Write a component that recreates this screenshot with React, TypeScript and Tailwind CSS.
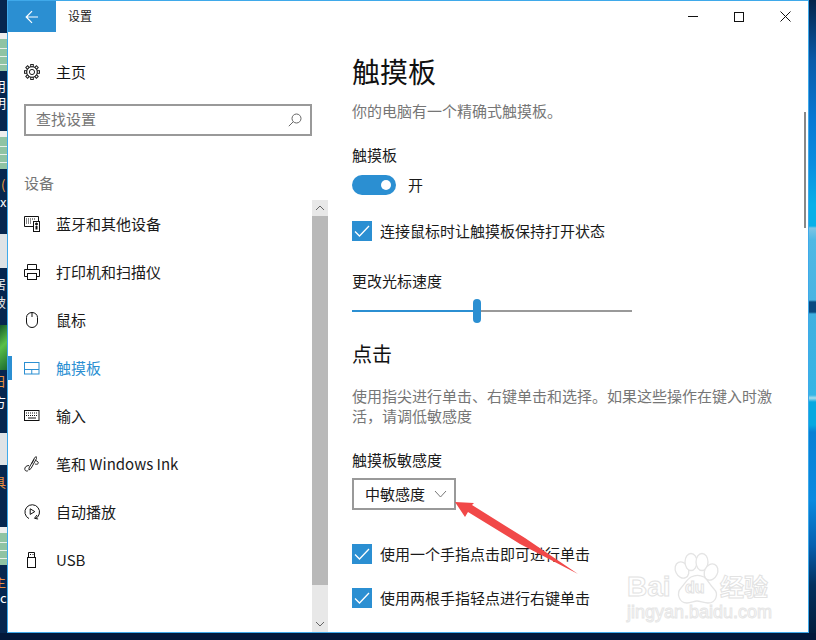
import React from "react";

const FONT = "font-['Noto_Sans_CJK_SC','Noto_Sans',sans-serif]";

function Gear() {
  const teeth = [0, 45, 90, 135, 180, 225, 270, 315];
  return (
    <svg width="16" height="16" viewBox="0 0 16 16" fill="none" stroke="#222" strokeWidth="1">
      <circle cx="8" cy="8" r="2.6" />
      <circle cx="8" cy="8" r="5.4" />
      {teeth.map((t) => (
        <rect key={t} x="6.7" y="0.5" width="2.6" height="2.2" fill="#fff" transform={`rotate(${t} 8 8)`} />
      ))}
    </svg>
  );
}

function DeviceIcon() {
  return (
    <svg width="16" height="16" viewBox="0 0 16 16" fill="none" stroke="#111" strokeWidth="1">
      <path d="M9 10.500H.5V.5h14V5" />
      <rect x="9.500" y="5.500" width="6" height="10" />
      <path d="M2 3h10M2 5h6M2 7h6" strokeDasharray="1 1" />
      <circle cx="12.500" cy="8" r="1" fill="#111" />
      <path d="M12.500 10v3.500" strokeWidth="2" />
    </svg>
  );
}
function PrinterIcon() {
  return (
    <svg width="16" height="16" viewBox="0 0 16 16" fill="none" stroke="#111" strokeWidth="1">
      <path d="M3.500 5V.5h9V5" />
      <path d="M3.500 12.500H.5V5.500h15v7h-3" />
      <rect x="3.500" y="9.500" width="9" height="6" />
    </svg>
  );
}
function MouseIcon() {
  return (
    <svg width="16" height="16" viewBox="0 0 16 16" fill="none" stroke="#111" strokeWidth="1">
      <path d="M2.500 5.500a5.500 5 0 0 1 5.500-5 5.500 5 0 0 1 5.500 5V10a5.500 5.500 0 0 1-11 0Z" />
      <path d="M8 .5V5" />
    </svg>
  );
}
function PadIcon() {
  return (
    <svg width="16" height="13" viewBox="0 0 16 13" fill="none" stroke="#2b8fd2" strokeWidth="1">
      <rect x="0.500" y="0.500" width="14.500" height="11.500" />
      <path d="M.5 7.500H15M7.750 7.500V12" />
    </svg>
  );
}
function KeyboardIcon() {
  return (
    <svg width="16" height="12" viewBox="0 0 16 12" fill="none" stroke="#111" strokeWidth="1">
      <rect x="0.500" y="0.500" width="14.500" height="10" />
      <path d="M2 3h12M2 5.500h12" strokeDasharray="1 1" />
      <path d="M4 8h8" />
    </svg>
  );
}
function PenIcon() {
  return (
    <svg width="16" height="16" viewBox="0 0 16 16" fill="none" stroke="#222" strokeWidth="1">
      <path d="M5 12 10.500 2 12 .5l.5 2L7 12.500 5 14Z" />
      <path d="M7.500 8 10 3.500" />
      <path d="M11.500 4.500c2 .5 3.500 2 2.500 3.200-.7.8-2 .6-3 .3" />
      <path d="M5 9.500C2 9.500.5 11.500.8 13.500c.3 1.700 2.400 2 3.400 1" />
    </svg>
  );
}
function AutoplayIcon() {
  return (
    <svg width="16" height="16" viewBox="0 0 16 16" fill="none" stroke="#111" strokeWidth="1">
      <path d="M5 14.600A7.300 7.300 0 1 1 11 14.800" />
      <path d="M6.200 4.800v5.600l4.600-2.800Z" />
      <path d="M13 11l-2.500 3.300 3.600.7" />
    </svg>
  );
}
function UsbIcon() {
  return (
    <svg width="16" height="16" viewBox="0 0 16 16" fill="none" stroke="#111" strokeWidth="1">
      <rect x="3.500" y="5.500" width="8" height="10" />
      <path d="M4.500 5.500V.5h6v5" />
      <path d="M6 2.500h1M8.500 2.500h1" />
    </svg>
  );
}

function Nav({ icon, label, active }: { icon: React.ReactNode; label: string; active?: boolean }) {
  return (
    <div className="relative flex h-12 items-center pl-4">
      {active && <div className="absolute left-0 top-3 h-6 w-1 bg-[#2b8fd2]" />}
      <div className="flex w-4 items-center justify-center">{icon}</div>
      <span className={`ml-4 text-[15px] leading-5 ${active ? "text-[#2b8fd2]" : "text-[#1a1a1a]"}`}>{label}</span>
    </div>
  );
}

function Check({ label, className }: { label: string; className: string }) {
  return (
    <div className={`flex h-5 items-center gap-2 ${className}`}>
      <div className="flex h-5 w-5 items-center justify-center bg-[#2b8fd2]">
        <svg width="16" height="12" viewBox="0 0 16 12" fill="none" stroke="#fff" strokeWidth="1.3">
          <path d="M1 6.500 5.500 11 15 1" />
        </svg>
      </div>
      <span className="text-[15px] leading-5 text-[#1a1a1a]">{label}</span>
    </div>
  );
}

function Sheet({ className }: { className: string }) {
  return (
    <div className={`flex h-[38px] w-[7px] flex-col bg-[#8fc3a3] ${className}`}>
      <div className="h-[6px] bg-[#eeeeee]" />
      <div className="mt-[9px] h-px bg-[#e8f0ea]" />
      <div className="mt-[7px] h-px bg-[#e8f0ea]" />
      <div className="mt-[7px] h-px bg-[#e8f0ea]" />
    </div>
  );
}

function Frag({ t, className }: { t: string; className: string }) {
  return <div className={`h-[15px] overflow-hidden text-[13px] leading-[15px] whitespace-nowrap ${className}`}>{t}</div>;
}

function LeftStrip() {
  return (
    <div className="flex w-[7px] shrink-0 flex-col overflow-hidden bg-[#06264f]">
      <Sheet className="mt-[33px]" />
      <Frag t="用" className="mt-[7px] text-white [text-indent:-7px]" />
      <Frag t="明" className="mt-[2px] text-white [text-indent:-7px]" />
      <Sheet className="mt-[21px]" />
      <Frag t="(" className="mt-[8px] text-[#f0a040] [text-indent:1px]" />
      <Frag t="x" className="mt-[2px] text-white" />
      <div className="mt-[25px] h-[34px] w-[7px] bg-[#dfe3e6]" />
      <Frag t="居" className="mt-[8px] text-[#e8e8e8] [text-indent:-7px]" />
      <Frag t="破" className="mt-[3px] text-[#e8e8e8] [text-indent:-7px]" />
      <div className="mt-[16px] h-[45px] w-[7px] bg-[linear-gradient(135deg,#145a2a,#58c048_45%,#1c6a30)]" />
      <Frag t="日" className="mt-[3px] text-[#e89040] [text-indent:-7px]" />
      <Frag t="方" className="mt-[6px] text-white [text-indent:-7px]" />
      <div className="mt-[24px] h-[32px] w-[7px] bg-[#dfe3e6]" />
      <Frag t="具" className="mt-[9px] text-[#e89040] [text-indent:-7px]" />
      <Sheet className="mt-[38px]" />
      <Frag t="主" className="mt-[9px] text-[#e89040] [text-indent:-7px]" />
      <Frag t="c" className="mt-px text-white" />
    </div>
  );
}

function Watermark() {
  return (
    <div className="pointer-events-none absolute left-[627px] top-[552px] h-[74px] w-[146px]">
      <svg className="absolute left-0 top-0" width="146" height="56" viewBox="0 0 146 56" fill="#fff" stroke="#e4e4e4" strokeWidth="1.3">
        <ellipse cx="55" cy="18" rx="6.500" ry="8.500" transform="rotate(-25 55 18)" />
        <ellipse cx="64" cy="10" rx="6" ry="8.500" />
        <ellipse cx="75" cy="10" rx="6" ry="8.500" />
        <ellipse cx="84" cy="20" rx="6.500" ry="8.500" transform="rotate(25 84 20)" />
        <path d="M64 25c-4 2-7 8-10 11-5 5-2 15 6 15 4 0 7-2 10-2s7 2 11 2c8 0 11-9 6-14-4-4-6-9-10-12-4-2-9-2-13 0Z" />
      </svg>
      <span className="absolute left-0 top-[21px] font-['Liberation_Sans',sans-serif] text-[28px] font-bold leading-[28px] text-white [-webkit-text-stroke:1px_#e2e2e2]">Bai</span>
      <span className="absolute left-[58px] top-[25px] font-['Liberation_Sans',sans-serif] text-[16px] font-bold leading-[22px] text-white [-webkit-text-stroke:1px_#e2e2e2]">du</span>
      <span className={`absolute left-[93px] top-[20px] ${FONT} text-[24px] font-bold leading-[28px] text-white [-webkit-text-stroke:1px_#e2e2e2]`}>经验</span>
      <span className="absolute left-0 top-[49px] whitespace-nowrap font-['Liberation_Sans',sans-serif] text-[18px] leading-[22px] text-white [-webkit-text-stroke:1px_#e6e6e6]">jingyan.baidu.com</span>
    </div>
  );
}

function Arrow() {
  return (
    <svg className="pointer-events-none absolute left-[440px] top-[495px]" width="150" height="90" viewBox="440 495 150 90">
      <polygon points="455,502 474,503 472,505 525,538 578,574 520,544 468,512 465,517" fill="#f14848" />
    </svg>
  );
}

export default function App() {
  return (
    <div className={`relative flex h-[640px] w-[816px] flex-col overflow-hidden bg-[#03183a] ${FONT}`}>
      <div className="flex h-[633px] w-full">
        <LeftStrip />
        <div className="flex w-[802px] flex-col border border-[#3fa9ea] bg-white">
          <div className="flex flex-1">
            {/* sidebar */}
            <div className="flex w-[320px] shrink-0 flex-col">
              <div className="flex h-[31px] items-center">
                <div className="flex h-full w-12 items-center justify-center bg-[#2b8fd2]">
                  <svg width="14" height="14" viewBox="0 0 14 14" fill="none" stroke="#fff" strokeWidth="1.2">
                    <path d="M13 7H1.500M7 1.200 1.200 7 7 12.800" />
                  </svg>
                </div>
                <span className="ml-3 pb-[2px] text-xs text-[#1a1a1a]">设置</span>
              </div>
              <div className="mt-4 flex h-12 items-center pl-4">
                <Gear />
                <span className="ml-4 text-[15px] leading-5 text-[#111]">主页</span>
              </div>
              <div className="ml-4 mt-2 flex h-8 w-[288px] items-center justify-between border-2 border-[#999999] pl-[10px] pr-2">
                <span className="pb-[2px] text-[15px] leading-5 text-[#767676]">查找设置</span>
                <svg width="14" height="14" viewBox="0 0 14 14" fill="none" stroke="#666" strokeWidth="1">
                  <circle cx="8.500" cy="5.500" r="4.500" />
                  <path d="M5.300 8.700.8 13.200" />
                </svg>
              </div>
              <div className="ml-4 mt-[37px] text-[15px] leading-5 text-[#767676]">设备</div>
              <div className="mt-[7px] flex flex-1">
                <div className="flex-1">
                  <Nav icon={<DeviceIcon />} label="蓝牙和其他设备" />
                  <Nav icon={<PrinterIcon />} label="打印机和扫描仪" />
                  <Nav icon={<MouseIcon />} label="鼠标" />
                  <Nav icon={<PadIcon />} label="触摸板" active />
                  <Nav icon={<KeyboardIcon />} label="输入" />
                  <Nav icon={<PenIcon />} label="笔和 Windows Ink" />
                  <Nav icon={<AutoplayIcon />} label="自动播放" />
                  <Nav icon={<UsbIcon />} label="USB" />
                </div>
                <div className="flex w-4 flex-col bg-[#e8e8e8]">
                  <div className="flex h-4 items-center justify-center">
                    <svg width="10" height="6" viewBox="0 0 10 6" fill="none" stroke="#666"><path d="M1 5 5 1l4 4" /></svg>
                  </div>
                  <div className="flex-1 bg-[#b9b9b9]" />
                  <div className="flex h-[47px] items-end justify-center pb-[5px]">
                    <svg width="10" height="6" viewBox="0 0 10 6" fill="none" stroke="#666"><path d="M1 1l4 4 4-4" /></svg>
                  </div>
                </div>
              </div>
            </div>
            {/* content */}
            <div className="flex flex-1 flex-col">
              <div className="flex h-[31px] justify-end">
                <div className="flex w-[46px] items-center justify-center">
                  <div className="h-px w-[10px] bg-[#111]" />
                </div>
                <div className="flex w-[46px] items-center justify-center">
                  <div className="h-[10px] w-[10px] border border-[#111]" />
                </div>
                <div className="flex w-[46px] items-center justify-center">
                  <svg width="11" height="11" viewBox="0 0 11 11" fill="none" stroke="#111"><path d="M.5.5l10 10M10.500.5l-10 10" /></svg>
                </div>
              </div>
              <div className="flex flex-1">
                <div className="flex-1 pl-6">
                  <div className="mt-[17px] text-[28px] leading-[44px] text-[#111]">触摸板</div>
                  <div className="mt-2 text-[15px] leading-5 text-[#767676]">你的电脑有一个精确式触摸板。</div>
                  <div className="mt-6 text-[15px] leading-5 text-[#1a1a1a]">触摸板</div>
                  <div className="mt-[10px] flex h-5 items-center">
                    <div className="flex h-5 w-11 items-center justify-end rounded-full bg-[#2b8fd2] pr-[5px]">
                      <div className="h-[10px] w-[10px] rounded-full bg-white" />
                    </div>
                    <span className="ml-3 text-[15px] leading-5 text-[#1a1a1a]">开</span>
                  </div>
                  <Check label="连接鼠标时让触摸板保持打开状态" className="mt-[26px]" />
                  <div className="mt-[30px] text-[15px] leading-5 text-[#1a1a1a]">更改光标速度</div>
                  <div className="relative mt-2 flex h-6 w-[280px] items-center">
                    <div className="h-[2px] w-[121px] bg-[#2b8fd2]" />
                    <div className="h-6 w-2 rounded-full bg-[#2b8fd2]" />
                    <div className="h-[2px] flex-1 bg-[#999999]" />
                  </div>
                  <div className="mt-[17px] text-[20px] leading-7 text-[#111]">点击</div>
                  <div className="mt-[18px] w-[425px] text-[15px] leading-5 text-[#767676]">使用指尖进行单击、右键单击和选择。如果这些操作在键入时激活，请调低敏感度</div>
                  <div className="mt-6 text-[15px] leading-5 text-[#1a1a1a]">触摸板敏感度</div>
                  <div className="mt-2 flex h-8 w-[104px] items-center border-2 border-[#999999] pl-[11px]">
                    <span className="text-[15px] leading-5 text-[#1a1a1a]">中敏感度</span>
                    <svg className="ml-[9px]" width="13" height="8" viewBox="0 0 13 8" fill="none" stroke="#777"><path d="M1 1l5.500 6L12 1" /></svg>
                  </div>
                  <Check label="使用一个手指点击即可进行单击" className="mt-[34px]" />
                  <Check label="使用两根手指轻点进行右键单击" className="mt-6" />
                </div>
                <div className="mr-[2px] w-[2px]">
                  <div className="mt-[80px] h-[116px] w-[2px] bg-[#888888]" />
                </div>
              </div>
            </div>
          </div>
        </div>
        <div className="flex-1 bg-[linear-gradient(180deg,#04234a_0,#0a5aa8_60px,#0878d4_120px,#0a8ee0_165px,#08b0e8_205px,#08b0e8_226px,#7ec4e4_228px,#4fb8e4_240px,#4ab4e2_300px,#0a4a80_302px,#0a4a80_312px,#40b0e0_314px,#35b5e5_395px,#a8dcec_398px,#06a8e0_402px,#06a8e0_425px,#0780d5_432px,#0a8ae0_500px,#0660b0_545px,#03305e_585px,#021a38_640px)]" />
      </div>
      <Watermark />
      <Arrow />
    </div>
  );
}
